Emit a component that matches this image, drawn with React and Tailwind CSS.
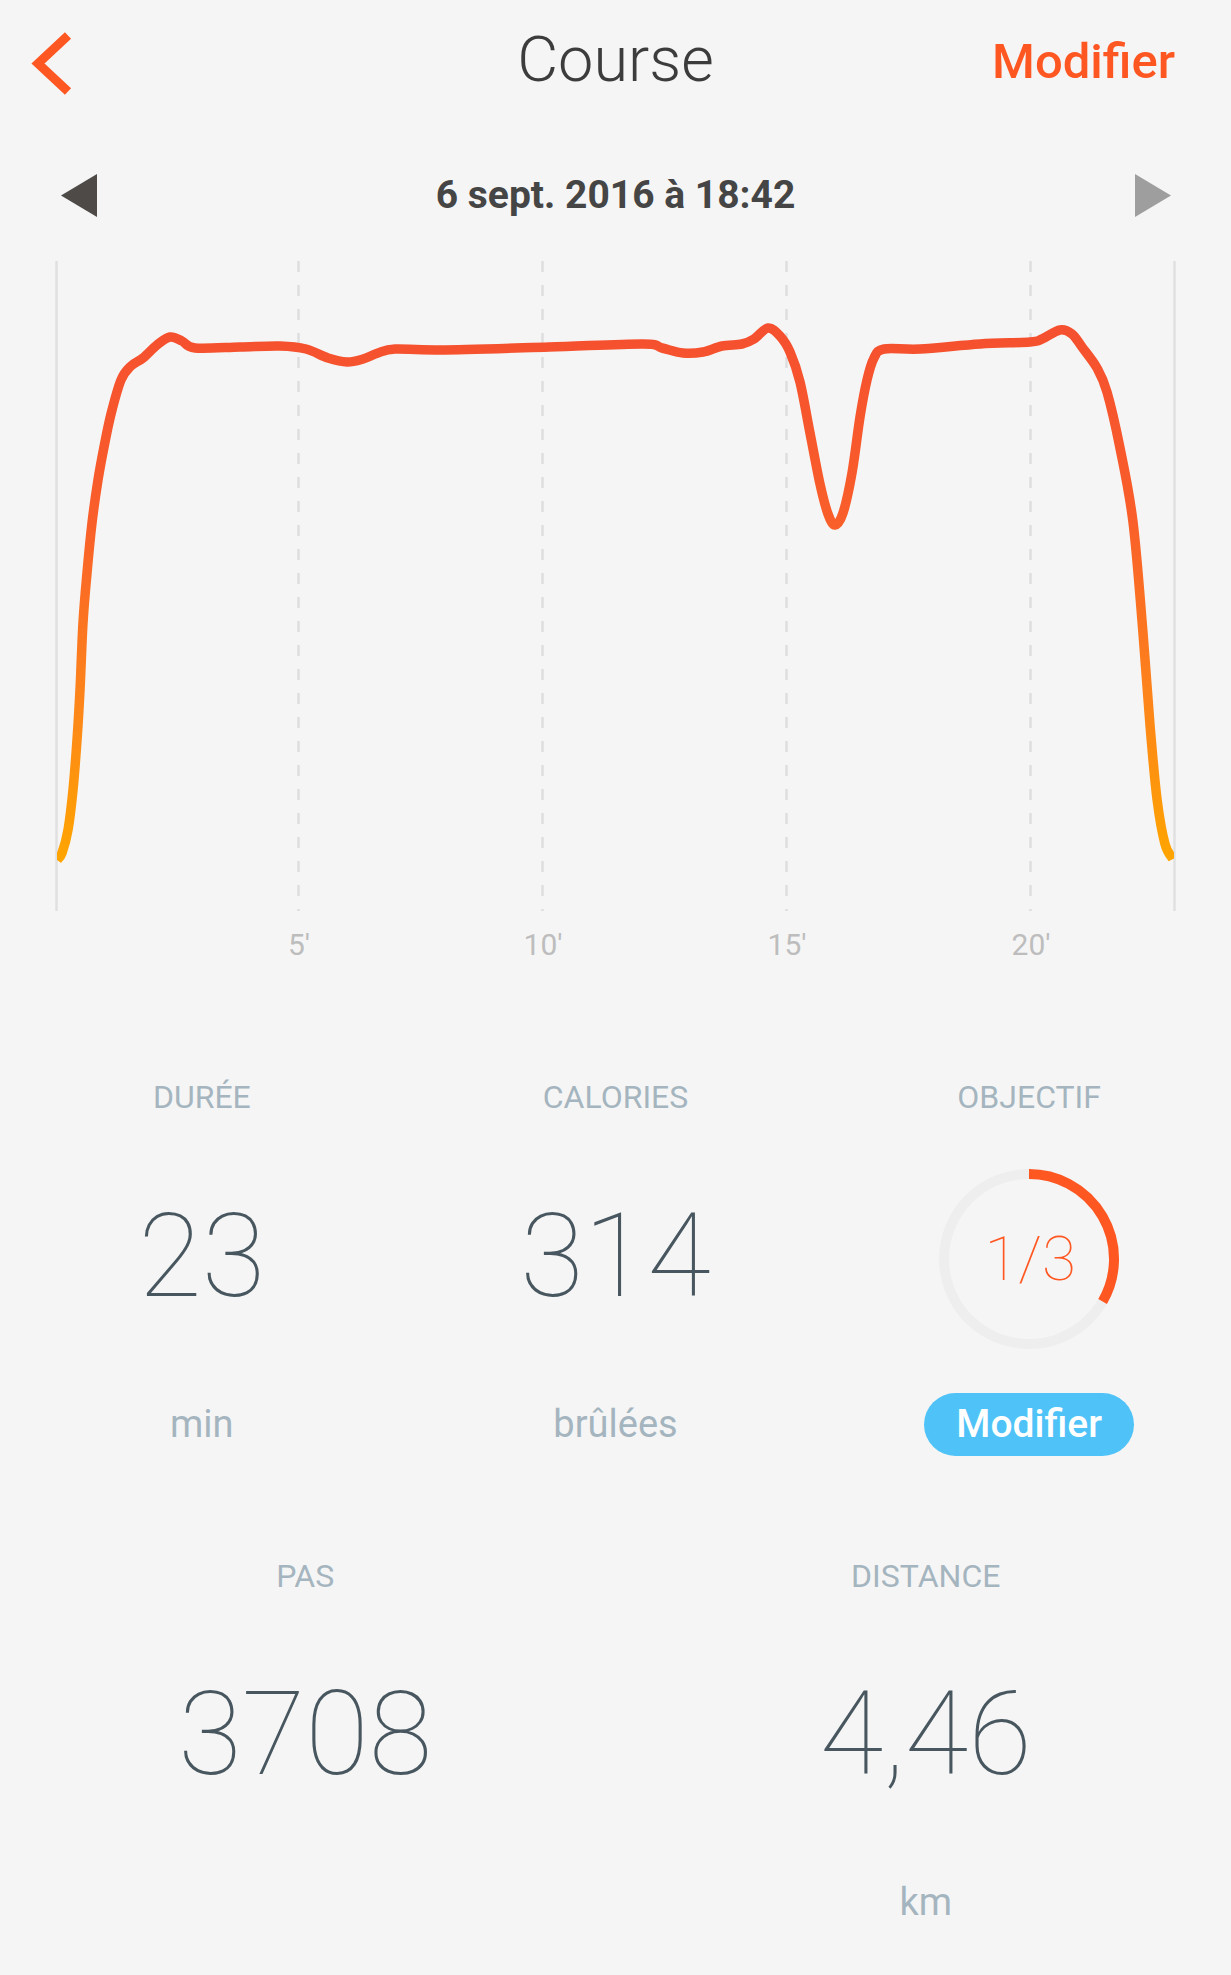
const PTS = [
  [57, 860], [62, 853], [68, 830], [73, 790], [77, 740], [80, 690], [83, 623], [87, 573], [92, 523], [98, 480],
  [104, 447], [111, 414], [121, 380], [131, 366], [143, 358], [157, 345], [170, 337], [182, 341], [195, 348],
  [240, 347], [280, 346], [306, 349], [328, 358], [347, 362], [363, 359], [378, 353], [395, 349], [440, 350],
  [549, 347], [643, 344], [662, 348], [683, 353], [703, 352], [722, 346], [742, 344], [754, 339], [768, 328],
  [780, 336], [790, 352], [800, 382], [810, 433], [820, 484], [828, 514], [835, 525], [843, 513], [852, 473],
  [860, 417], [867, 380], [874, 358], [884, 349], [920, 349], [980, 344], [1030, 342], [1042, 339], [1060, 330],
  [1072, 334], [1082, 347], [1097, 368], [1107, 392], [1120, 448], [1133, 522], [1143, 633], [1150, 725],
  [1157, 799], [1165, 844], [1173, 859],
];

function smoothPath(p) {
  let d = `M${p[0][0]},${p[0][1]}`;
  for (let i = 0; i < p.length - 1; i++) {
    const p0 = p[i - 1] || p[i];
    const p1 = p[i];
    const p2 = p[i + 1];
    const p3 = p[i + 2] || p2;
    const c1x = p1[0] + (p2[0] - p0[0]) / 6;
    const c1y = p1[1] + (p2[1] - p0[1]) / 6;
    const c2x = p2[0] - (p3[0] - p1[0]) / 6;
    const c2y = p2[1] - (p3[1] - p1[1]) / 6;
    d += ` C${c1x.toFixed(2)},${c1y.toFixed(2)} ${c2x.toFixed(2)},${c2y.toFixed(2)} ${p2[0]},${p2[1]}`;
  }
  return d;
}

const CURVE = smoothPath(PTS);

function Chart() {
  const dashed = [298.5, 542.5, 786.5, 1030.5];
  const labels = ["5'", "10'", "15'", "20'"];
  return (
    <svg className="block mt-[34px]" width="1231" height="720" viewBox="0 250 1231 720">
      <defs>
        <linearGradient id="runGrad" gradientUnits="userSpaceOnUse" x1="0" y1="330" x2="0" y2="862">
          <stop offset="0" stopColor="#f5502f" />
          <stop offset="0.35" stopColor="#f95e2a" />
          <stop offset="0.7" stopColor="#fd851a" />
          <stop offset="1" stopColor="#ffa500" />
        </linearGradient>
        <clipPath id="chartClip">
          <rect x="57" y="250" width="1117" height="700" />
        </clipPath>
      </defs>
      <line x1="56.5" y1="261" x2="56.5" y2="911" stroke="#e0e0e0" strokeWidth="2.5" />
      <line x1="1174.5" y1="261" x2="1174.5" y2="911" stroke="#e0e0e0" strokeWidth="2.5" />
      {dashed.map((x) => (
        <line key={x} x1={x} y1="261" x2={x} y2="911" stroke="#dedede" strokeWidth="2.5" strokeDasharray="11 13" />
      ))}
      <path d={CURVE} fill="none" stroke="url(#runGrad)" strokeWidth="9.5" strokeLinejoin="round" clipPath="url(#chartClip)" />
      {dashed.map((x, i) => (
        <text
          key={x}
          x={x + 0.5}
          y="955"
          textAnchor="middle"
          fontFamily="Roboto, 'Liberation Sans', sans-serif"
          fontSize="30"
          fill="#bdbdbd"
        >
          {labels[i]}
        </text>
      ))}
    </svg>
  );
}

function Label({ children }) {
  return <div className="text-[32px] leading-[38px] text-[#a5b5bf]">{children}</div>;
}

function BigNum({ children }) {
  return <div className="text-[116px] leading-[174px] font-thin text-[#48575f]">{children}</div>;
}

function Unit({ children }) {
  return <div className="text-[38px] leading-[63px] text-[#a5b5bf]">{children}</div>;
}

function Goal() {
  return (
    <div className="grid place-items-center w-[180px] h-[180px]">
      <svg className="col-start-1 row-start-1 block" width="180" height="180" viewBox="0 0 180 180">
        <circle cx="90" cy="90" r="85" fill="none" stroke="#eeeeee" strokeWidth="10" />
        <path d="M90 5 A85 85 0 0 1 163.61 132.5" fill="none" stroke="#ff5722" strokeWidth="10" />
      </svg>
      <div className="col-start-1 row-start-1 text-[62px] leading-[62px] font-thin text-[#ff5722] ml-[2px]">1/3</div>
    </div>
  );
}

export default function App() {
  return (
    <div className="w-[1231px] min-h-[1975px] bg-[#f5f5f5] overflow-hidden font-['Roboto','Liberation_Sans',sans-serif]">
      {/* header */}
      <div className="grid grid-cols-[1fr_auto_1fr] items-start h-[140px]">
        <div className="pl-[30px] pt-[32px]">
          <svg className="block" width="44" height="64" viewBox="0 0 44 64">
            <polyline points="38,3.5 8,31.5 38,59.5" fill="none" stroke="#ff5722" strokeWidth="9" />
          </svg>
        </div>
        <div className="pt-[23px] text-[63px] leading-[74px] font-light text-[#3c3c3c]">Course</div>
        <div className="justify-self-end pt-[33px] pr-[56px] text-[49px] leading-[58px] font-medium text-[#ff5722]">
          Modifier
        </div>
      </div>

      {/* date row */}
      <div className="mt-[33px] grid grid-cols-[1fr_auto_1fr] items-center h-[43px]">
        <div className="pl-[61px]">
          <svg className="block" width="36" height="43" viewBox="0 0 36 43">
            <polygon points="0,21.5 36,0 36,43" fill="#4d4a48" />
          </svg>
        </div>
        <div className="text-[39px] leading-[44px] font-bold text-[#454545]">6 sept. 2016 à 18:42</div>
        <div className="justify-self-end pr-[60px]">
          <svg className="block" width="36" height="43" viewBox="0 0 36 43">
            <polygon points="0,0 36,21.5 0,43" fill="#9e9e9e" />
          </svg>
        </div>
      </div>

      <Chart />

      {/* stats row 1 */}
      <div className="mt-[108px] flex justify-center">
        <div className="w-[1241px] shrink-0 grid grid-cols-3">
          <div className="flex flex-col items-center">
            <Label>DURÉE</Label>
            <div className="mt-[53px] h-[180px]">
              <BigNum>23</BigNum>
            </div>
            <div className="mt-[44px] h-[63px]">
              <Unit>min</Unit>
            </div>
          </div>
          <div className="flex flex-col items-center">
            <Label>CALORIES</Label>
            <div className="mt-[53px] h-[180px]">
              <BigNum>314</BigNum>
            </div>
            <div className="mt-[44px] h-[63px]">
              <Unit>brûlées</Unit>
            </div>
          </div>
          <div className="flex flex-col items-center">
            <Label>OBJECTIF</Label>
            <div className="mt-[53px] h-[180px]">
              <Goal />
            </div>
            <div className="mt-[44px] h-[63px]">
              <button className="w-[210px] h-[63px] rounded-full bg-[#4fc3f7] text-white text-[39px] leading-[63px] font-medium">
                Modifier
              </button>
            </div>
          </div>
        </div>
      </div>

      {/* stats row 2 */}
      <div className="mt-[101px] flex justify-center">
        <div className="w-[1241px] shrink-0 grid grid-cols-2">
          <div className="flex flex-col items-center">
            <Label>PAS</Label>
            <div className="mt-[52px] h-[174px]">
              <BigNum>3708</BigNum>
            </div>
          </div>
          <div className="flex flex-col items-center">
            <Label>DISTANCE</Label>
            <div className="mt-[52px] h-[174px]">
              <BigNum>4,46</BigNum>
            </div>
            <div className="mt-[50px] h-[63px]">
              <Unit>km</Unit>
            </div>
          </div>
        </div>
      </div>
    </div>
  );
}
